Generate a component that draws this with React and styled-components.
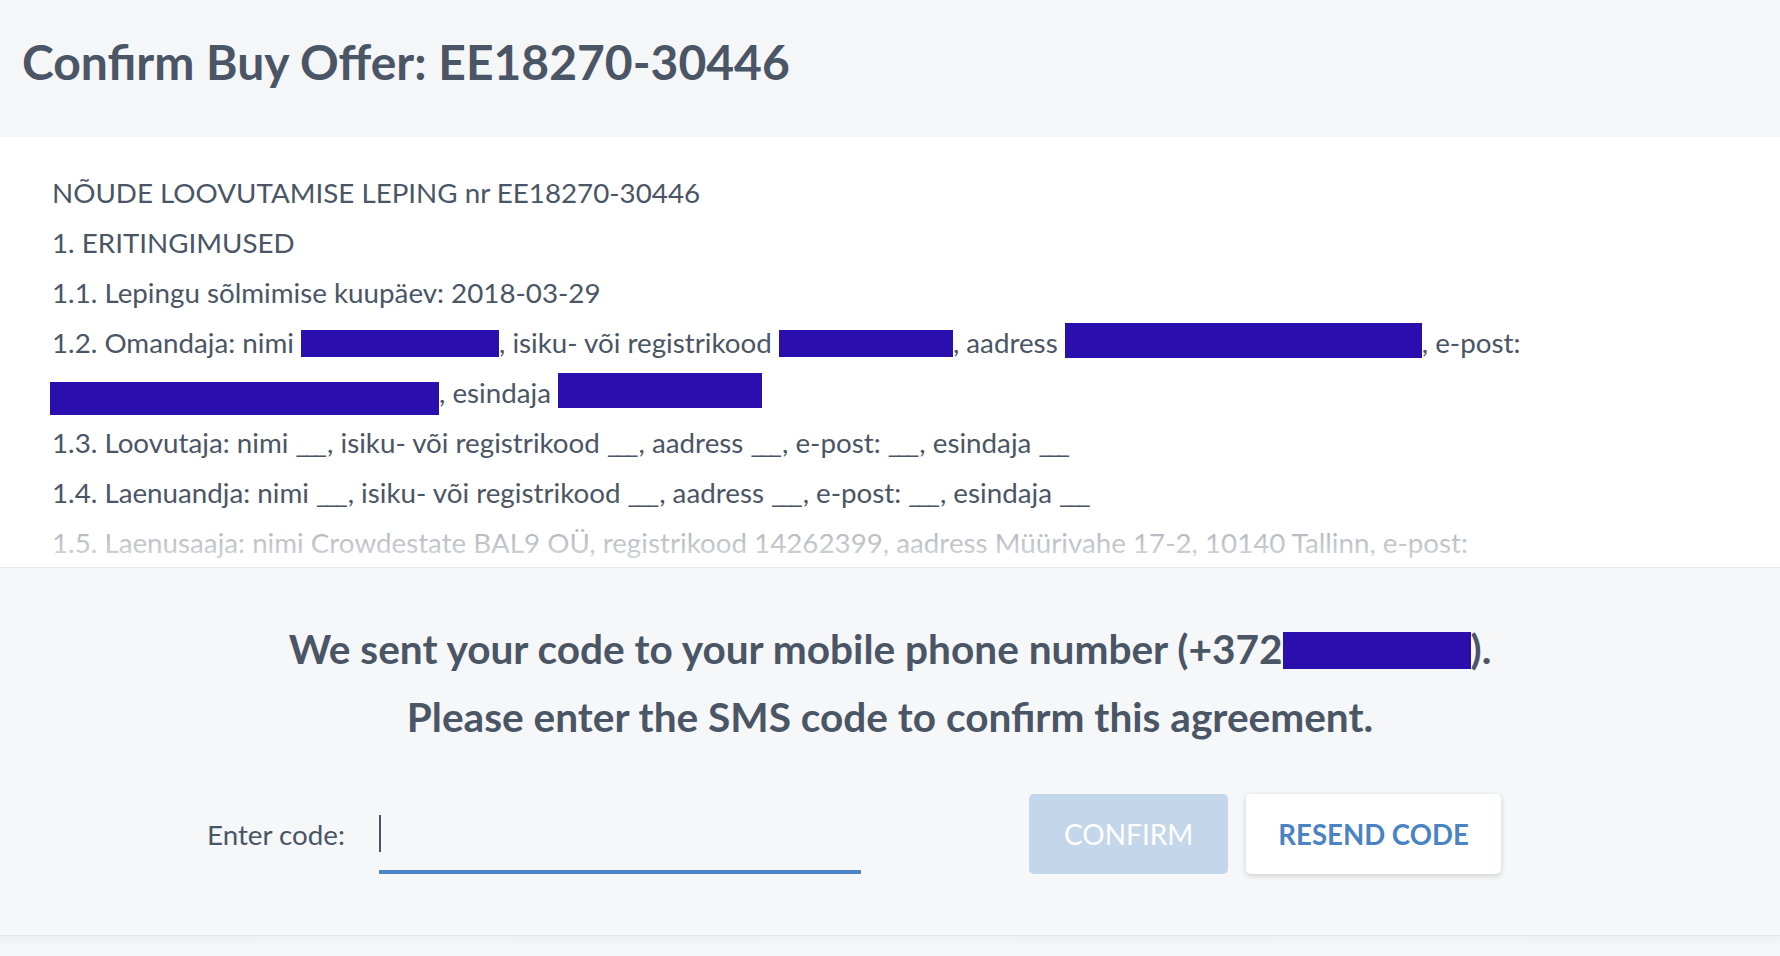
import React from 'react';
import styled, { createGlobalStyle } from 'styled-components';

const GlobalStyle = createGlobalStyle`
    body {
        margin: 0;
        background-color: #f6f7f9;
        font-family: Lato, "Open Sans", sans-serif;
        color: #4a5565;
    }
`;

const App = () => {
    return (
        <Page>
            <GlobalStyle />
            <Header>
                <Title>Confirm Buy Offer: EE18270-30446</Title>
            </Header>
            <Agreement>
                <Line>NÕUDE LOOVUTAMISE LEPING nr EE18270-30446</Line>
                <Line>1. ERITINGIMUSED</Line>
                <Line>1.1. Lepingu sõlmimise kuupäev: 2018-03-29</Line>
                <Line>
                    1.2. Omandaja: nimi <Redacted w={198} h={27} drop={4} />, isiku- või registrikood{' '}
                    <Redacted w={174} h={27} drop={4} />, aadress <Redacted w={357} h={35} drop={5} />, e-post:{' '}
                    <Redacted w={389} h={33} drop={12} shift={-2} />, esindaja <Redacted w={204} h={35} drop={5} />
                </Line>
                <Line>
                    1.3. Loovutaja: nimi <Blank>___</Blank>, isiku- või registrikood <Blank>___</Blank>, aadress{' '}
                    <Blank>___</Blank>, e-post: <Blank>___</Blank>, esindaja <Blank>___</Blank>
                </Line>
                <Line>
                    1.4. Laenuandja: nimi <Blank>___</Blank>, isiku- või registrikood <Blank>___</Blank>, aadress{' '}
                    <Blank>___</Blank>, e-post: <Blank>___</Blank>, esindaja <Blank>___</Blank>
                </Line>
                <Line>1.5. Laenusaaja: nimi Crowdestate BAL9 OÜ, registrikood 14262399, aadress Müürivahe 17-2, 10140 Tallinn, e-post:</Line>
                <Fade />
            </Agreement>
            <SmsPanel>
                <Notice>
                    We sent your code to your mobile phone number (+372<Redacted w={188} h={37} drop={5} />).
                    <br />
                    Please enter the SMS code to confirm this agreement.
                </Notice>
                <FormRow>
                    <CodeField>
                        <Label>Enter code:</Label>
                        <CodeInput>
                            <Caret />
                        </CodeInput>
                    </CodeField>
                    <Buttons>
                        <Button disabled>CONFIRM</Button>
                        <Button variant="outline">RESEND CODE</Button>
                    </Buttons>
                </FormRow>
            </SmsPanel>
            <Footer />
        </Page>
    );
};

export default App;

const Page = styled.div`
    width: 100%;
    min-height: 100vh;
    display: flex;
    flex-direction: column;
`;

const Header = styled.header`
    height: 137px;
    box-sizing: border-box;
    padding: 38px 0 0 22px;
    background-color: #f5f6f8;
`;

const Title = styled.h1`
    margin: 0;
    font-size: 48px;
    line-height: 48px;
    font-weight: 700;
    color: #4a5565;
`;

// Agreement text, clipped at the bottom
const Agreement = styled.section`
    position: relative;
    height: 431px;
    box-sizing: border-box;
    padding: 31px 52px 0 52px;
    background-color: #ffffff;
    border-bottom: 1px solid #e6e8eb;
    overflow: hidden;
`;

const Line = styled.p`
    margin: 0;
    font-size: 27.75px;
    line-height: 50px;
    color: #4a5565;
`;

const Blank = styled.span`
    letter-spacing: -3.3px;
    margin-right: 3.3px;
`;

const Redacted = styled.span`
    display: inline-block;
    width: ${({ w }) => w}px;
    height: ${({ h }) => h}px;
    margin-left: ${({ shift }) => shift || 0}px;
    vertical-align: -${({ drop }) => drop}px;
    background-color: #2a0fae;
`;

const Fade = styled.div`
    position: absolute;
    left: 0;
    right: 0;
    bottom: 0;
    height: 50px;
    background: linear-gradient(rgba(255, 255, 255, 0.5), rgba(255, 255, 255, 0.8));
`;

// SMS confirmation panel
const SmsPanel = styled.section`
    height: 368px;
    box-sizing: border-box;
    padding-top: 47px;
    background-color: #f6f7f9;
    border-bottom: 1px solid #e3e5e8;
`;

const Notice = styled.h2`
    margin: 0;
    text-align: center;
    font-size: 40.6px;
    line-height: 68px;
    font-weight: 700;
    color: #4a5565;
`;

const FormRow = styled.div`
    display: flex;
    align-items: center;
    margin-top: 43px;
    padding-left: 207px;
`;

const CodeField = styled.div`
    display: flex;
    align-items: center;
`;

const Label = styled.label`
    font-size: 27.75px;
    color: #4a5565;
    margin-right: 34px;
`;

const CodeInput = styled.div`
    width: 482px;
    height: 80px;
    box-sizing: border-box;
    border-bottom: 4px solid #4a84c4;
    display: flex;
    align-items: center;
    padding-top: 2px;
`;

const Caret = styled.span`
    width: 2px;
    height: 37px;
    background-color: #4a5565;
`;

const Buttons = styled.div`
    display: flex;
    gap: 18px;
    margin-left: 168px;
`;

const Button = styled.button`
    height: 80px;
    padding: ${({ variant }) => (variant === 'outline' ? '0 32px' : '0 35px')};
    border: none;
    border-radius: 5px;
    font-family: Lato, sans-serif;
    font-size: ${({ variant }) => (variant === 'outline' ? '27.6px' : '28px')};
    font-weight: ${({ variant }) => (variant === 'outline' ? 700 : 400)};
    color: ${({ variant }) => (variant === 'outline' ? '#4a83c4' : '#ffffff')};
    background-color: ${({ variant }) => (variant === 'outline' ? '#ffffff' : '#c3d6ea')};
    box-shadow: ${({ variant }) => (variant === 'outline' ? '0 2px 6px rgba(0, 0, 0, 0.16)' : 'none')};
    cursor: pointer;

    &:disabled {
        cursor: default;
    }
`;

const Footer = styled.div`
    flex: 1;
    background: linear-gradient(#eef0f2, #f6f7f9 12px);
`;
